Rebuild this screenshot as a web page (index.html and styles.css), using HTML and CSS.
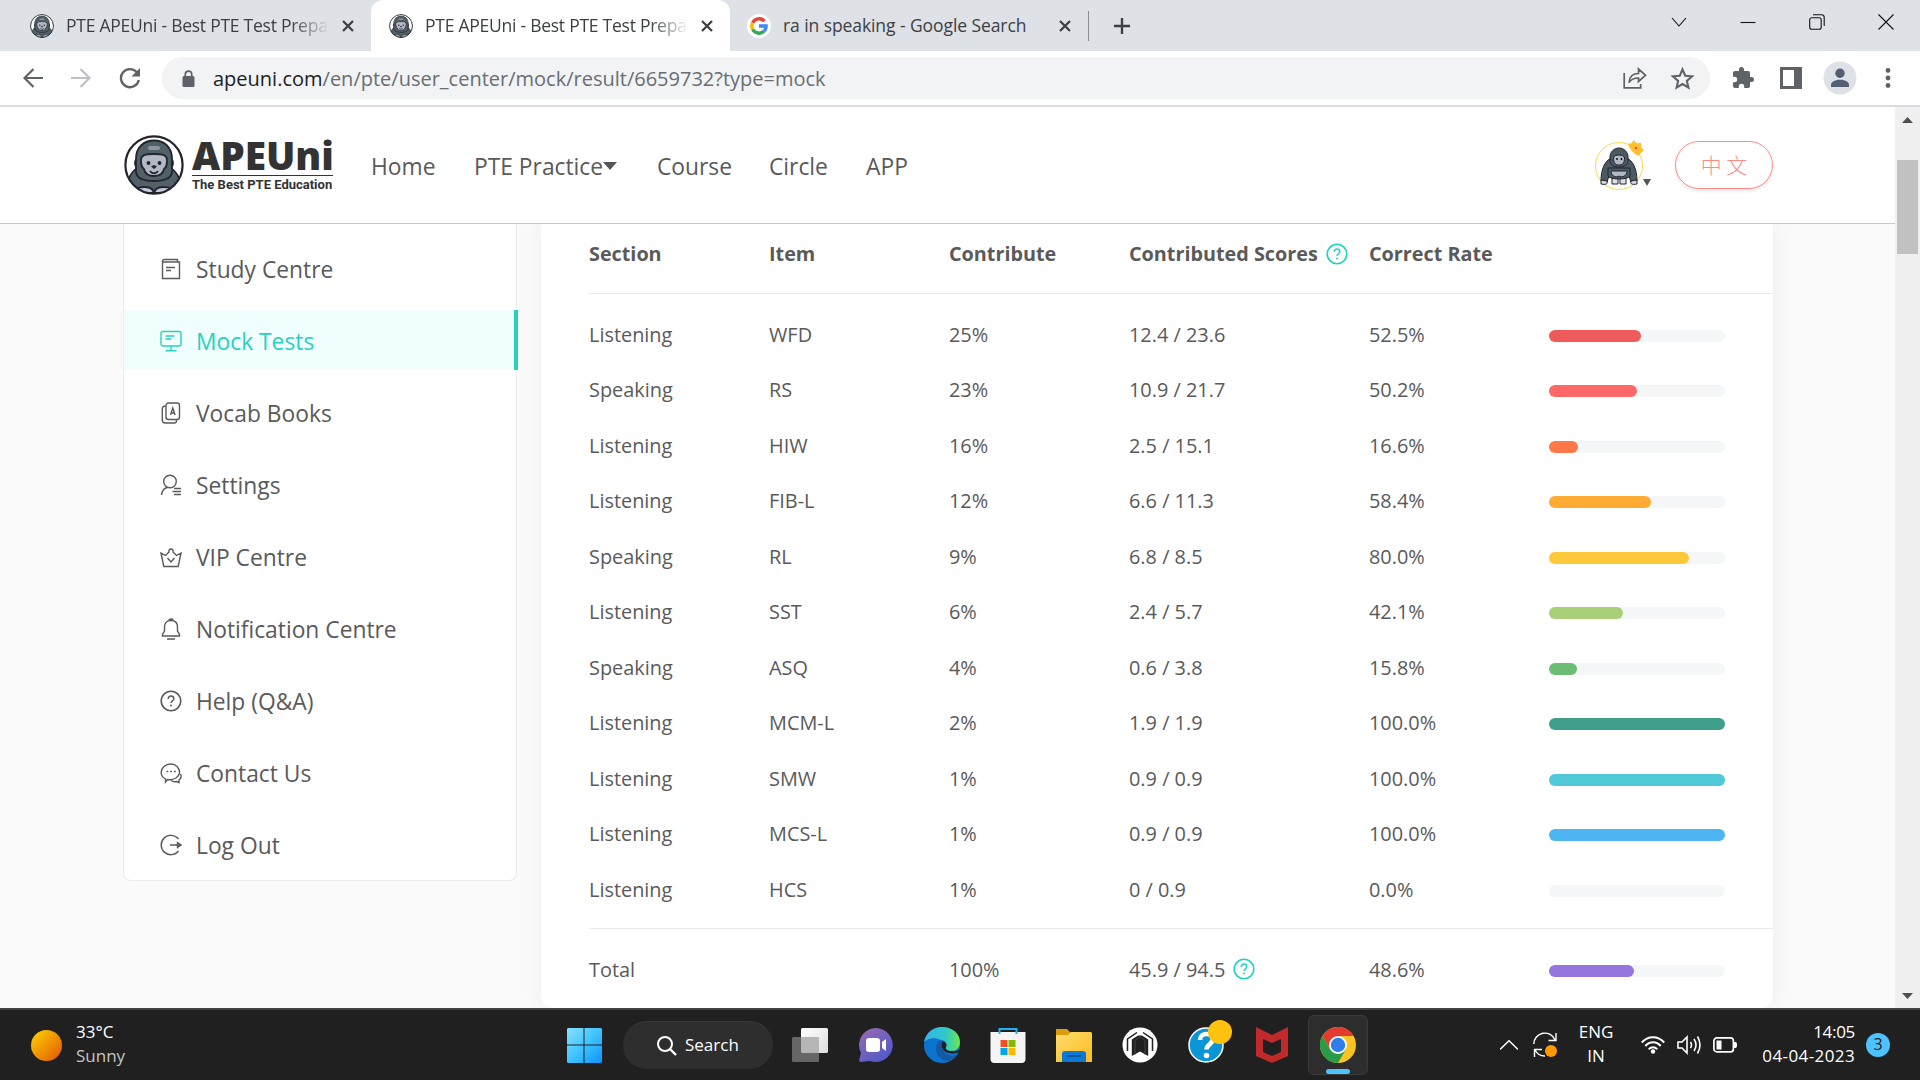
FILE: index.html
```
<!DOCTYPE html>
<html lang="en">
<head>
<meta charset="utf-8">
<title>PTE APEUni - Best PTE Test Preparation</title>
<link rel="stylesheet" href="styles.css">
</head>
<body>
<svg class="defs" width="0" height="0">
  <defs>
    <symbol id="ape" viewBox="0 0 60 60">
      <clipPath id="apeclip"><circle cx="30" cy="30" r="28.6"/></clipPath>
      <circle cx="30" cy="30" r="28.6" fill="#fff"/>
      <g clip-path="url(#apeclip)" stroke="#23252e" stroke-width="1.8">
        <path d="M0 60C3 42 10 33 18 31h24c8 2 15 11 18 29z" fill="#526068"/>
        <ellipse cx="14" cy="28" rx="3" ry="4.500" fill="#b4b8c6"/><ellipse cx="46" cy="28" rx="3" ry="4.500" fill="#b4b8c6"/>
        <path d="M12 36V24C12 12 20 5.500 30 5.500S48 12 48 24v12c0 6-6 10-18 10S12 42 12 36z" fill="#526068"/>
        <path d="M17 25c0-5 4-6 13-6s13 1 13 6c0 4 0 7-3 9-1 5-5 7-10 7s-9-2-10-7c-3-2-3-5-3-9z" fill="#b4b8c6"/>
        <path d="M10 58c0-5 6-6 11-6 6 0 9 2 9 8 0-6 3-8 9-8 5 0 11 1 11 6z" fill="#c5c9d8"/>
        <path d="M26 36c2 3 6 3 8 0" fill="none"/>
      </g>
      <rect x="24" y="11" width="12" height="4" rx="2" fill="#8d969b"/>
      <circle cx="24.500" cy="28" r="1.900" fill="#23252e"/><circle cx="35.500" cy="28" r="1.900" fill="#23252e"/>
      <path d="M27 31.500l3-1.500 3 1.500-3 2.500z" fill="#23252e"/>
      <circle cx="30" cy="30" r="28.600" fill="none" stroke="#23252e" stroke-width="2.200"/>
    </symbol>
    <symbol id="close" viewBox="0 0 14 14"><path d="M2 2l10 10M12 2L2 12" stroke="#3c4043" stroke-width="2.300"/></symbol>
    <symbol id="help" viewBox="0 0 22 22"><circle cx="11" cy="11" r="9.800" fill="none" stroke="currentColor" stroke-width="1.600"/><path d="M8.200 9c0-1.800 1.200-2.900 2.800-2.900S13.800 7.200 13.800 8.700c0 2-2.800 2.200-2.800 4.300" fill="none" stroke="currentColor" stroke-width="1.500"/><circle cx="11" cy="15.500" r="1" fill="currentColor" stroke="none"/></symbol>
  </defs>
</svg>

<div class="tabs">
  <div class="tab first"><svg class="fav" viewBox="0 0 60 60"><use href="#ape"/></svg><span class="tab-title fade">PTE APEUni - Best PTE Test Prepa</span><svg class="x"><use href="#close"/></svg></div>
  <div class="tab active"><svg class="fav" viewBox="0 0 60 60"><use href="#ape"/></svg><span class="tab-title fade">PTE APEUni - Best PTE Test Prepa</span><svg class="x"><use href="#close"/></svg></div>
  <div class="tab third">
    <svg class="fav" viewBox="0 0 24 24"><circle cx="12" cy="12" r="12" fill="#fff"/><g fill="none" stroke-width="3.400"><path d="M17.500 7.200A7.300 7.300 0 0 0 5.600 8.700" stroke="#ea4335"/><path d="M5.600 8.700a7.300 7.300 0 0 0 0 6.600" stroke="#fbbc05"/><path d="M5.600 15.300a7.300 7.300 0 0 0 11.300 2" stroke="#34a853"/><path d="M16.900 17.300c1.600-1.400 2.300-3.400 2.200-5.300H12" stroke="#4285f4"/></g></svg>
    <span class="tab-title">ra in speaking - Google Search</span><svg class="x"><use href="#close"/></svg>
  </div>
  <i class="tab-sep"></i>
  <svg class="plus" viewBox="0 0 20 20"><path d="M10 1v18M1 10h18" stroke="#3c4043" stroke-width="2.600"/></svg>
  <div class="win">
    <svg viewBox="0 0 16 16"><path d="M1 4l7 8 7-8"/></svg>
    <svg viewBox="0 0 16 16"><path d="M.5 8.500h15"/></svg>
    <svg viewBox="0 0 16 16"><rect x=".7" y="3.700" width="11.500" height="11.500" rx="2"/><path d="M4 .8h8.500c2 0 2.700 1 2.700 2.700V12"/></svg>
    <svg viewBox="0 0 16 16"><path d="M.5.5l15 15M15.500.5l-15 15"/></svg>
  </div>
</div>

<div class="toolbar">
  <svg class="back" viewBox="0 0 20 20"><path d="M20 10H2M10.500 1L1.500 10l9 9" fill="none" stroke="#5f6368" stroke-width="2.200"/></svg>
  <svg class="fwd" viewBox="0 0 20 20"><path d="M0 10h18M9.500 1l9 9-9 9" fill="none" stroke="#bdc1c6" stroke-width="2.200"/></svg>
  <svg class="reload" viewBox="0 0 22 22"><path d="M18 5.500A9 9 0 1 0 19.800 13" fill="none" stroke="#5f6368" stroke-width="2.400"/><path d="M21 1v8.500h-8.500z" fill="#5f6368"/></svg>
  <div class="omni">
    <svg class="lock" viewBox="0 0 12 17"><rect y="6" width="12" height="11" rx="1.500" fill="#5f6368"/><path d="M2.800 7V4.300a3.200 3.200 0 0 1 6.400 0V7" fill="none" stroke="#5f6368" stroke-width="1.700"/></svg>
    <span class="url"><b>apeuni.com</b>/en/pte/user_center/mock/result/6659732?type=mock</span>
    <svg class="share" viewBox="0 0 24 22"><path d="M1.200 6v14.800h16.500V17M6 15.500c.5-6 4-9 9.500-9V2l7 6.300-7 6.200V11C11 11 8 12.500 6 15.500z" fill="none" stroke="#5f6368" stroke-width="1.700"/></svg>
    <svg class="star" viewBox="0 0 24 24"><path d="M12 3.200l2.600 6.100 6.600.6-5 4.400 1.500 6.500L12 17.300l-5.700 3.500 1.500-6.500-5-4.400 6.600-.6z" fill="none" stroke="#5f6368" stroke-width="2"/></svg>
  </div>
  <svg class="puzzle" viewBox="0 0 24 24"><path d="M20.500 11H19V7c0-1.100-.9-2-2-2h-4V3.500a2.500 2.500 0 0 0-5 0V5H4c-1.100 0-2 .9-2 2v3.800h1.500a2.700 2.700 0 0 1 0 5.400H2V20c0 1.100.9 2 2 2h3.800v-1.500a2.700 2.700 0 0 1 5.400 0V22H17c1.100 0 2-.9 2-2v-4h1.500a2.500 2.500 0 0 0 0-5z" fill="#5f6368"/></svg>
  <svg class="panel" viewBox="0 0 22 22"><path fill-rule="evenodd" d="M0 0h22v22H0zM3 3v16h11V3z" fill="#5f6368"/></svg>
  <svg class="user" viewBox="0 0 34 34"><circle cx="17" cy="17" r="16.500" fill="#dee1e6"/><circle cx="17" cy="12.300" r="4.700" fill="#525f73"/><path d="M8 26v-2.500c0-3 5-4.700 9-4.700s9 1.700 9 4.700V26z" fill="#525f73"/></svg>
  <svg class="dots" viewBox="0 0 6 20"><circle cx="3" cy="2.500" r="2.400"/><circle cx="3" cy="10" r="2.400"/><circle cx="3" cy="17.500" r="2.400"/></svg>
</div>

<div class="view">
  <div class="page">
    <header class="site">
      <svg class="logo" viewBox="0 0 60 60"><use href="#ape"/></svg>
      <div class="brand"><strong>APEUni</strong><em>The Best PTE Education</em></div>
      <nav>
        <a class="n1">Home</a><a class="n2">PTE Practice<svg class="caret" viewBox="0 0 14 8"><path d="M0 0h14L7 8z"/></svg></a><a class="n3">Course</a><a class="n4">Circle</a><a class="n5">APP</a>
      </nav>
      <div class="avatar">
        <svg class="ava" viewBox="0 0 48 50">
          <circle cx="24" cy="26" r="23.500" fill="#fff" stroke="#fbd84b"/>
          <g stroke="#23252e" stroke-width="1">
            <path d="M6 41c0-12 4-22 13-24h10c9 2 13 12 13 24l-6 1-3-9H15l-3 9z" fill="#4b5a61"/>
            <path d="M6 40l6 1c1 3-1 4-6 3zM42 40l-6 1c-1 3 1 4 6 3z" fill="#d5d9e2"/>
            <path d="M17 38h6v6h-6zM25 38h6v6h-6z" fill="#dfe2ea"/>
            <path d="M13 28h22v8c-2 4-20 4-22 0z" fill="#4b5a61"/>
            <path d="M16 31h16c0 5-5 7-8 5-3 2-8 0-8-5z" fill="#b4b8c6"/>
            <path d="M15 21v-4c0-5 4-9 9-9s9 4 9 9v4c0 4-4 6-9 6s-9-2-9-6z" fill="#4b5a61"/>
            <path d="M18.500 18c0-4 11-4 11 0 0 5-2 7-5.500 7s-5.500-2-5.500-7z" fill="#b4b8c6"/>
          </g>
          <circle cx="22" cy="19" r=".9"/><circle cx="26.500" cy="19" r=".9"/>
        </svg>
        <svg class="crown" viewBox="0 0 17 17"><path d="M0 4l4-.5L5.500 0l4 3.500L14 3v5l3 2.500-3 3-3 3C7 15 2 11 0 4z" fill="#fdc02f"/><circle cx="8.500" cy="8.500" r="1.400" fill="#ef5350"/></svg>
        <svg class="tri" viewBox="0 0 8 7"><path d="M0 0h8L4 7z"/></svg>
      </div>
      <button class="lang">中 文</button>
    </header>
    <div class="content">
      <aside>
        <a><svg viewBox="0 0 22 22"><path d="M2.500 3v17.500h17V4H2.500M2.500 4c0-2 .7-2.500 2-2.500h13V4M6 9.500h9M6 12.500h5"/></svg><span>Study Centre</span></a>
        <a class="on"><svg viewBox="0 0 22 22"><rect x="1" y="1.500" width="20" height="14.500" rx="2"/><path d="M11 16v4.500M5.500 20.700h11M5.500 6h9M5.500 9h6"/></svg><span>Mock Tests</span></a>
        <a><svg viewBox="0 0 22 22"><rect x="6" y="1" width="13.500" height="16.500" rx="2.500"/><path d="M5.500 4C3 4 2.300 5 2.300 7v11c0 2 1 3 3 3h9c1.500 0 2.400-1.500 2.400-3.500M10.500 13l2.300-7 2.300 7M11.300 11h3"/></svg><span>Vocab Books</span></a>
        <a><svg viewBox="0 0 22 22"><circle cx="10" cy="7.500" r="6.300"/><path d="M1.500 21c.5-4 2.500-7 6-7.500M14 14.500h7M12.500 17.500h8.500M14 20.500h7"/></svg><span>Settings</span></a>
        <a><svg viewBox="0 0 22 22"><path d="M3.800 20.500L1 7l4.500 2.500L9 6c-1-4 5-4 4 0l3.500 3.500L21 7l-2.800 13.500zM7.500 12l3.500 4 3.500-4"/></svg><span>VIP Centre</span></a>
        <a><svg viewBox="0 0 22 22"><path d="M2.500 18v-1.500L4.500 13V9c0-4 2.500-6.500 6.500-6.500s6.500 2.500 6.500 6.500v4l2 3.500V18zM7 21h8M9 2.500c0-2 4-2 4 0"/></svg><span>Notification Centre</span></a>
        <a><svg><use href="#help"/></svg><span>Help (Q&amp;A)</span></a>
        <a><svg viewBox="0 0 22 22"><path d="M5.500 20v-3C0 14 0 8 4 4.500c4-3.500 10-3 13 0 4 4 3 9-1 11.500-3 1.700-6 2-8.500 1.500zM11 18.500c2 1.500 4 1.500 6 1l2 1v-2.500c2-1.500 2.500-4 1.500-6M6.500 9.500h1.800M10.200 9.500H12M14 9.500h1.800"/></svg><span>Contact Us</span></a>
        <a><svg viewBox="0 0 22 22"><path d="M18.500 5A9.700 9.700 0 1 0 18.500 17M10 11h10M17.500 8.500L21 11l-3.500 2.500z"/></svg><span>Log Out</span></a>
      </aside>
      <main>
        <div class="row head"><span>Section</span><span>Item</span><span>Contribute</span><span class="wide">Contributed Scores<svg class="q"><use href="#help"/></svg></span><span>Correct Rate</span></div>
        <div class="rows">
          <div class="row"><span>Listening</span><span>WFD</span><span>25%</span><span class="wide">12.4 / 23.6</span><span>52.5%</span><div class="bar"><i style="width:52.5%;background:#ef5b5b"></i></div></div>
          <div class="row"><span>Speaking</span><span>RS</span><span>23%</span><span class="wide">10.9 / 21.7</span><span>50.2%</span><div class="bar"><i style="width:50.2%;background:#ff6868"></i></div></div>
          <div class="row"><span>Listening</span><span>HIW</span><span>16%</span><span class="wide">2.5 / 15.1</span><span>16.6%</span><div class="bar"><i style="width:16.6%;background:#ff7847"></i></div></div>
          <div class="row"><span>Listening</span><span>FIB-L</span><span>12%</span><span class="wide">6.6 / 11.3</span><span>58.4%</span><div class="bar"><i style="width:58%;background:#ffaa33"></i></div></div>
          <div class="row"><span>Speaking</span><span>RL</span><span>9%</span><span class="wide">6.8 / 8.5</span><span>80.0%</span><div class="bar"><i style="width:79.6%;background:#fdc93a"></i></div></div>
          <div class="row"><span>Listening</span><span>SST</span><span>6%</span><span class="wide">2.4 / 5.7</span><span>42.1%</span><div class="bar"><i style="width:42.1%;background:#a9d078"></i></div></div>
          <div class="row"><span>Speaking</span><span>ASQ</span><span>4%</span><span class="wide">0.6 / 3.8</span><span>15.8%</span><div class="bar"><i style="width:15.8%;background:#6cbd74"></i></div></div>
          <div class="row"><span>Listening</span><span>MCM-L</span><span>2%</span><span class="wide">1.9 / 1.9</span><span>100.0%</span><div class="bar"><i style="width:100%;background:#409f8c"></i></div></div>
          <div class="row"><span>Listening</span><span>SMW</span><span>1%</span><span class="wide">0.9 / 0.9</span><span>100.0%</span><div class="bar"><i style="width:100%;background:#50c8d6"></i></div></div>
          <div class="row"><span>Listening</span><span>MCS-L</span><span>1%</span><span class="wide">0.9 / 0.9</span><span>100.0%</span><div class="bar"><i style="width:100%;background:#4db5f2"></i></div></div>
          <div class="row"><span>Listening</span><span>HCS</span><span>1%</span><span class="wide">0 / 0.9</span><span>0.0%</span><div class="bar"></div></div>
        </div>
        <div class="row total"><span>Total</span><span></span><span>100%</span><span class="wide">45.9 / 94.5<svg class="q"><use href="#help"/></svg></span><span>48.6%</span><div class="bar"><i style="width:48.3%;background:#9575de"></i></div></div>
      </main>
    </div>
  </div>
  <div class="scroll"><svg viewBox="0 0 11 6"><path d="M0 6h11L5.500 0z"/></svg><i></i><svg viewBox="0 0 11 6"><path d="M0 0h11L5.500 6z"/></svg></div>
</div>

<div class="taskbar">
  <div class="weather"><i></i><div><p>33°C</p><p class="dim">Sunny</p></div></div>
  <div class="apps">
    <svg class="start" viewBox="0 0 36 36"><defs><linearGradient id="w" x2="1" y2="1"><stop stop-color="#8ae0ff"/><stop offset=".5" stop-color="#3fc4ff"/><stop offset="1" stop-color="#0a94ff"/></linearGradient></defs><path d="M1 0h16v17H0V1zM18 0h17l1 1v16H18zM0 18h17v18H1l-1-1zM18 18h18v17l-1 1H18z" fill="url(#w)"/></svg>
    <div class="search"><svg viewBox="0 0 20 20"><circle cx="8" cy="8" r="7" fill="none" stroke="#fff" stroke-width="2"/><path d="M13 13l6 6" stroke="#fff" stroke-width="2.400"/></svg><span>Search</span></div>
    <svg class="app" viewBox="0 0 36 36"><defs><linearGradient id="tv" x2="1" y2="1"><stop stop-color="#fff"/><stop offset="1" stop-color="#dcdcdc"/></linearGradient></defs><rect x="9" y="1" width="27" height="25" rx="1.500" fill="url(#tv)"/><rect y="10" width="27" height="25" rx="1.500" fill="#666"/><path d="M9 10h18v16H10l-1-1z" fill="#b5b5b5"/></svg>
    <svg class="app" viewBox="0 0 36 36"><defs><linearGradient id="ch" x1="0" x2=".7" y2="1"><stop stop-color="#9c6ab0"/><stop offset="1" stop-color="#5059c9"/></linearGradient></defs><path d="M18 1a17 17 0 1 1-6 33l-9.500 1L1 33.500 3 26A17 17 0 0 1 18 1z" fill="url(#ch)"/><rect x="8" y="11" width="14" height="14" rx="3" fill="#fff"/><path d="M24 15l4-3v12l-4-3z" fill="#fff"/></svg>
    <svg class="app" viewBox="0 0 36 36"><defs><linearGradient id="e1" x2="1"><stop stop-color="#35b5f0"/><stop offset=".6" stop-color="#2fc7c8"/><stop offset="1" stop-color="#6bea4c"/></linearGradient></defs><circle cx="18" cy="18" r="18" fill="#0c73cf"/><path d="M0 15C2 5 10 0 18 0c11 0 18 7 18 15 0 6-4 9-9 9-4 0-6-2-5-4 2-3-1-7-5-7-6-3-13-2-17 2z" fill="url(#e1)"/><path d="M12 20c-1 8 5 14 14 14 3-1 6-4 8-7-8 4-15 0-16-7 0-3-1-5 1-6-4-1-6 2-7 6z" fill="#1559a5"/><path d="M19 14c-3 3-1 11 6 12 5 1 8 0 10-1l2-5c-2 4-6 5-10 4-4 0-6-2-5-4 1-2 0-5-3-6z" fill="#202020"/></svg>
    <svg class="app" viewBox="0 0 36 36"><path d="M.5 5h35v27c0 2-1 4-4 4h-27c-3 0-4-2-4-4z" fill="#f4f4f4"/><path d="M9.500 7V2h17v5" fill="none" stroke="#25aef2" stroke-width="2"/><path d="M10.500 13h7v7h-7z" fill="#f25022"/><path d="M18.500 13h7v7h-7z" fill="#7fba00"/><path d="M10.500 21h7v7h-7z" fill="#00a4ef"/><path d="M18.500 21h7v7h-7z" fill="#ffb900"/></svg>
    <svg class="app" viewBox="0 0 36 36"><defs><linearGradient id="fo" x2="1" y2="1"><stop stop-color="#ffdd70"/><stop offset="1" stop-color="#fcbc1c"/></linearGradient></defs><path d="M0 2h11l4 4v6H0z" fill="#dd9c0b"/><path d="M0 8h12l3-3h20l1 1v29H0z" fill="url(#fo)"/><path d="M6 35V27q0-3 3-3h18q3 0 3 3v8z" fill="#0f78d4"/><path d="M11 29h14" stroke="#0a4f96" stroke-width="1.500"/></svg>
    <svg class="app" viewBox="0 0 36 36"><circle cx="18" cy="18" r="17.500" fill="#fff"/><path d="M15 5.500L5.500 12v12M21 5.500l9.500 6.500v12" stroke="#202020" stroke-width="1.500" fill="none"/><path d="M9.800 29V12.500L16 8.500h4l6.200 4V29L18 24.500z" fill="#202020"/><path d="M18 9v0M13 28V13.500l5-4 5 4V28" stroke="#555" stroke-width=".7" fill="none"/><path d="M18 25l8 6c-4 3-12 3-16 0z" fill="#fff"/></svg>
    <div class="app badge-app"><svg viewBox="0 0 36 36"><circle cx="18" cy="18" r="17" fill="#0a96d6" stroke="#fff" stroke-width="1.500"/><path d="M12 13c0-4 3-6 6.500-6s6 2 6 5.500c0 5-6 5-6 10" stroke="#fff" stroke-width="4.500" fill="none"/><circle cx="18.500" cy="28.500" r="2.800" fill="#fff"/></svg><i></i></div>
    <svg class="app" viewBox="0 0 36 36"><path d="M2 0l16 8L34 0v29l-16 7-16-7zm7 12v13l9 4 9-4V12l-9 4z" fill="#c02a2b" fill-rule="evenodd"/></svg>
    <div class="chrome"><svg viewBox="0 0 36 36"><circle cx="18" cy="18" r="18" fill="#fbc423"/><path d="M2.400 9A18 18 0 0 1 33.600 9H18l-7.800 13.500z" fill="#e33b2e"/><path d="M2.400 9a18 18 0 0 0 15.600 27l7.800-13.500H10.200z" fill="#2a9b47"/><circle cx="18" cy="18" r="9" fill="#fff"/><circle cx="18" cy="18" r="7.200" fill="#2f7de9"/></svg><i></i></div>
  </div>
  <div class="tray">
    <svg class="up" viewBox="0 0 18 10"><path d="M0 9.500L9 .7l9 8.800"/></svg>
    <svg class="sync" viewBox="0 0 24 26"><path d="M.8 12A11 11 0 0 1 22 8M23 1v7.500h-7.500M1.500 25v-7.500H9M2 18c2 4 6 6 10 6"/><circle cx="18" cy="19" r="6" fill="#ff9a00" stroke="none"/></svg>
    <div class="kb"><p>ENG</p><p>IN</p></div>
    <svg class="wifi" viewBox="0 0 24 18"><path d="M.8 6.500c6-7 16.400-7 22.400 0M4.300 10c4.500-5 11-5 15.400 0M7.700 13.300c2.700-2.800 6-2.800 8.600 0" stroke-width="2"/><circle cx="12" cy="15.500" r="2.200" fill="#fff" stroke="none"/></svg>
    <svg class="vol" viewBox="0 0 24 20"><path d="M1 7h4l5-5v16l-5-5H1zM13.500 7q2 3 0 6M17 4q4 6 0 12M20.500 1.500q5 8.500 0 17" stroke-width="1.600"/></svg>
    <svg class="bat" viewBox="0 0 24 16"><rect x=".9" y=".9" width="19.500" height="14" rx="3" stroke-width="1.700"/><path d="M3.500 3.500h5v9h-5zM21 5h1.500q1.500 0 1.500 3t-1.500 3H21z" fill="#fff" stroke="none"/></svg>
    <div class="clock"><p class="time">14:05</p><p>04-04-2023</p></div>
    <b class="count">3</b>
  </div>
</div>
</body>
</html>
```
FILE: styles.css
```
* { box-sizing: border-box; }
body { margin: 0; width: 1920px; height: 1080px; overflow: hidden; display: flex; flex-direction: column; font-family: "Open Sans", "Noto Sans", "Noto Sans CJK SC", sans-serif; color: #5a5a5a; background: #fff; }
p { margin: 0; }
svg { display: block; flex: none; }
.defs { position: absolute; }

/* browser tabs */
.tabs { height: 51px; background: #dee1e6; display: flex; align-items: center; flex: none; }
.tab { height: 51px; display: flex; align-items: center; color: #3c4043; font-size: 17.5px; }
.tab.first { width: 371px; padding-left: 30px; border-radius: 0 0 10px 0; }
.tab.active { width: 359px; padding-left: 18px; background: #fff; border-radius: 12px 12px 0 0; }
.tab.third { width: 358px; padding-left: 17px; }
.fav { width: 24px; height: 24px; }
.tab-title { width: 262px; margin-left: 12px; padding-bottom: 1px; white-space: nowrap; overflow: hidden; letter-spacing: -.25px; }
.third .tab-title { width: 270px; letter-spacing: -.08px; }
.fade { -webkit-mask-image: linear-gradient(90deg, #000 225px, transparent 264px); mask-image: linear-gradient(90deg, #000 225px, transparent 264px); }
.x { width: 14px; height: 14px; margin-left: 12.5px; }
.third .x { margin-left: 5px; }
.tab-sep { width: 1px; height: 30px; background: #8a8d91; }
.plus { width: 18px; height: 18px; margin-left: 24px; }
.win { margin-left: auto; padding-right: 26px; display: flex; gap: 53px; padding-bottom: 8px; }
.win svg { width: 16px; height: 16px; fill: none; stroke: #111; stroke-width: 1.1; }

/* address bar */
.toolbar { height: 56px; border-bottom: 2px solid #dadce0; display: flex; align-items: center; flex: none; }
.back { width: 20px; height: 20px; margin-left: 22.5px; }
.fwd { width: 20px; height: 20px; margin-left: 28px; }
.reload { width: 22px; height: 22px; margin-left: 28px; }
.omni { width: 1548px; height: 42px; margin-left: 21.5px; border-radius: 21px; background: #f1f3f4; display: flex; align-items: center; }
.lock { width: 13px; height: 17px; margin-left: 20px; }
.url { margin-left: 18px; font-size: 20px; color: #6a6e73; }
.url b { font-weight: inherit; color: #202124; }
.share { width: 24px; height: 22px; margin-left: auto; }
.star { width: 25px; height: 25px; margin: 0 15px 0 23px; }
.puzzle { width: 24px; height: 24px; margin-left: 21px; }
.panel { width: 22px; height: 22px; margin-left: 25px; }
.user { width: 34px; height: 34px; margin-left: 21px; }
.dots { width: 6px; height: 20px; margin-left: 28px; fill: #5f6368; }

/* page viewport */
.view { height: 901px; display: flex; flex: none; overflow: hidden; }
.page { width: 1895px; display: flex; flex-direction: column; }
.site { height: 117px; border-bottom: 1px solid #c8c8c8; display: flex; align-items: center; flex: none; }
.logo { width: 60px; height: 60px; margin-left: 124px; }
.brand { width: 141px; margin-left: 8px; display: flex; flex-direction: column; color: #333; white-space: nowrap; }
.brand strong { font-size: 38.8px; line-height: 36px; height: 39px; font-weight: 800; border-bottom: 1px solid #333; }
.brand em { font: 700 13px/17px Roboto, sans-serif; }
nav { display: flex; font-size: 22.8px; align-items: center; padding-top: 2px; }
nav a { white-space: nowrap; display: flex; align-items: center; }
.n1 { width: 103px; margin-left: 38px; }
.n2 { width: 183px; }
.n3 { width: 112px; }
.n4 { width: 97px; }
.caret { width: 14px; height: 8px; fill: #555; }
.avatar { margin-left: auto; width: 56px; height: 50px; position: relative; }
.ava { width: 48px; height: 50px; }
.crown { position: absolute; left: 33px; top: 0; width: 16px; height: 16px; }
.tri { position: absolute; left: 48px; top: 39px; width: 8px; height: 7px; fill: #555; }
.lang { width: 98px; height: 48px; margin: 0 122px 0 24px; border: 1px solid #ff8a85; border-radius: 24px; background: #fff; color: #ff8a85; font: 300 21px "Noto Sans CJK SC", sans-serif; box-shadow: 0 3px 3px #eee; padding: 0 0 3px; }
.content { height: 784px; display: flex; align-items: flex-start; background: #fafafa; overflow: hidden; }
aside { width: 394px; height: 657px; margin-left: 123px; padding-top: 14px; border: 1px solid #ececec; border-top: 0; border-radius: 0 0 8px 8px; background: #fff; display: flex; flex-direction: column; gap: 12px; }
aside a { height: 60px; display: flex; align-items: center; padding: 2px 0 0 35.5px; font-size: 22.8px; flex: none; }
aside a svg { width: 22px; height: 22px; fill: none; stroke: currentColor; stroke-width: 1.4; margin-right: 14.5px; }
.on { margin-right: -2px; color: #29d0be; background: #f0fffd; border-right: 4px solid #29d0be; }
main { width: 1232px; height: 784px; margin-left: 24px; background: #fff; border-radius: 0 0 12px 12px; box-shadow: 0 0 20px rgba(0,0,0,.06); padding-left: 48px; }
.row { display: flex; align-items: center; height: 55.5px; font-size: 19.9px; }
.row > span { width: 180px; white-space: nowrap; display: flex; align-items: center; padding-bottom: 3px; }
.row > .wide { width: 240px; }
.head { height: 70px; border-bottom: 1px solid #ebebeb; font-weight: 700; font-size: 19.8px; padding-bottom: 7px; }
.rows { padding: 14px 0 9px; border-bottom: 1px solid #ebebeb; }
.total { height: 84px; }
.bar { width: 176px; height: 12px; border-radius: 6px; background: #f5f6f8; }
.bar i { display: block; height: 12px; border-radius: 6px; }
.q { width: 22px; height: 22px; margin-left: 8px; color: #1fd3c0; }
.scroll { width: 25px; background: #f0f0f0; display: flex; flex-direction: column; align-items: center; padding: 10px 0 9px; }
.scroll svg { width: 11px; height: 6px; fill: #505050; }
.scroll i { width: 21px; height: 94px; background: #c1c1c1; margin: 37px 0 auto; }

/* taskbar */
.taskbar { height: 72px; background: #202020; border-top: 2px solid #444; display: flex; align-items: center; color: #fff; font-size: 17px; line-height: 24px; flex: none; }
.weather { width: 567px; display: flex; align-items: center; padding-left: 31px; gap: 14px; }
.weather p, .tray p { position: relative; top: -1px; }
.weather i { width: 31px; height: 31px; border-radius: 50%; background: linear-gradient(135deg, #ffd500, #e05500); }
.dim { color: #c4c4c4; }
.apps { display: flex; align-items: center; }
.start { width: 35px; height: 35px; }
.search { width: 150px; height: 48px; margin: 0 19px 0 21px; border-radius: 24px; background: #2e2e2e; border-top: 1px solid #383838; display: flex; align-items: center; padding-left: 34px; gap: 8px; }
.search span { padding-bottom: 2px; }
.search svg { width: 20px; height: 20px; }
.app { width: 36px; height: 36px; margin-right: 30px; }
.badge-app { position: relative; }
.badge-app i { position: absolute; left: 20px; top: -7px; width: 24px; height: 24px; border-radius: 50%; background: #ffc20e; }
.chrome { width: 60px; height: 60px; margin-left: -12px; border: 1px solid #3a3a3a; border-radius: 6px; background: #2d2d2d; display: flex; flex-direction: column; align-items: center; padding-top: 11px; gap: 6px; }
.chrome svg { width: 36px; height: 36px; }
.chrome i { width: 24px; height: 5px; border-radius: 3px; background: #4cc2ff; }
.tray { margin-left: auto; padding-right: 30px; display: flex; align-items: center; }
.tray svg { fill: none; stroke: #fff; stroke-width: 1.4; }
.up { width: 18px; height: 10px; }
.sync { width: 24px; height: 26px; margin-left: 15px; }
.kb { width: 50px; margin-left: 14px; text-align: center; }
.wifi { width: 24px; height: 18px; margin-left: 20px; }
.vol { width: 24px; height: 20px; margin-left: 12px; }
.bat { width: 24px; height: 16px; margin-left: 12px; }
.clock { width: 96px; margin-left: 22px; text-align: right; white-space: nowrap; letter-spacing: .4px; }
.time { letter-spacing: -.3px; }
.count { width: 24px; height: 24px; margin-left: 11px; border-radius: 50%; background: #4cc2ff; color: #222; font-weight: 400; font-size: 16px; line-height: 23px; text-align: center; }
```
